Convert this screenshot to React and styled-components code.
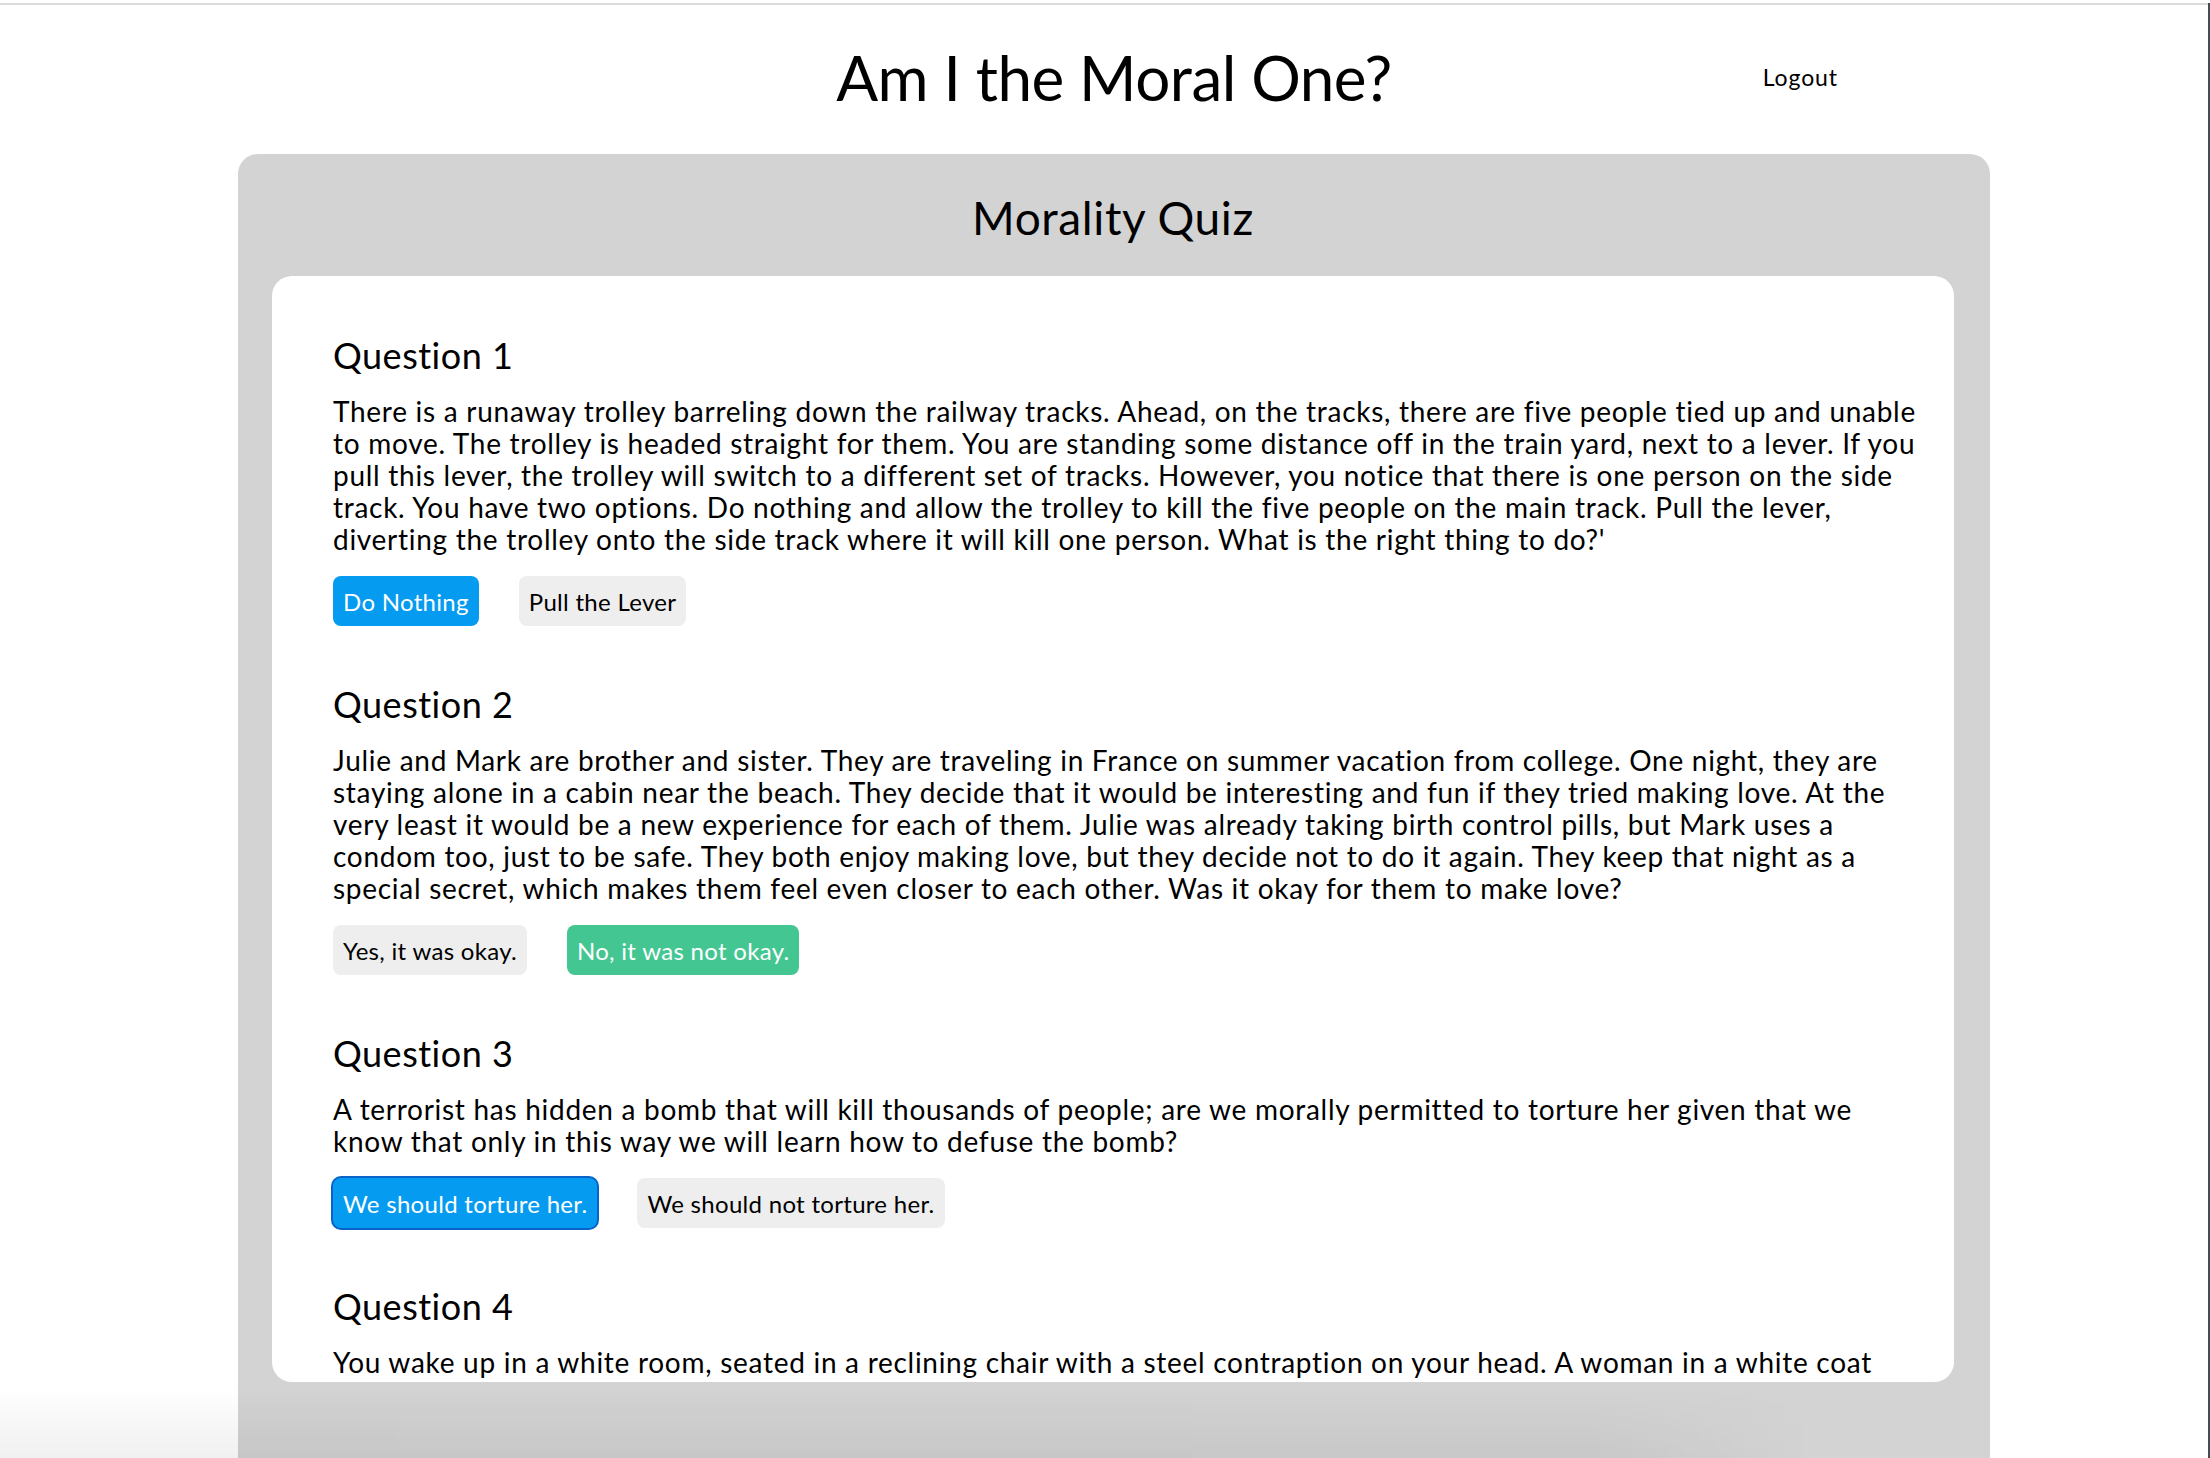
import styled, { createGlobalStyle, css } from "styled-components";

const GlobalStyle = createGlobalStyle`
  html, body {
    margin: 0;
    padding: 0;
    background: #fff;
    overflow: hidden;
  }
  body {
    font-family: Lato, "Open Sans", "Liberation Sans", sans-serif;
    color: #000;
  }
`;

const Page = styled.div`
  min-height: 100vh;
  border-right: 2px solid #474b56;
  box-sizing: border-box;
`;

const TopRule = styled.div`
  height: 2px;
  margin-top: 3px;
  background: #dddddd;
`;

const Header = styled.header`
  display: grid;
  grid-template-columns: 1fr auto 1fr;
  align-items: center;
  width: 1752px;
  height: 149px;
  margin-left: 238px;
  padding-bottom: 5px;
  box-sizing: border-box;
`;

const SiteTitle = styled.h1`
  grid-column: 2;
  margin: 0;
  font-size: 62px;
  font-weight: 400;
  letter-spacing: -0.5px;
`;

const LogoutLink = styled.button`
  justify-self: end;
  margin-right: 152px;
  padding: 0;
  border: none;
  background: none;
  font-family: inherit;
  font-size: 23px;
  letter-spacing: 0.9px;
  color: #000;
  cursor: pointer;
`;

const Panel = styled.main`
  width: 1752px;
  margin-left: 238px;
  padding: 0 36px 120px 34px;
  box-sizing: border-box;
  background: #d3d3d3;
  border-radius: 20px 20px 0 0;
`;

const PanelTitle = styled.h2`
  display: flex;
  align-items: center;
  justify-content: center;
  height: 122px;
  margin: 0;
  padding-top: 4px;
  box-sizing: border-box;
  font-size: 46px;
  font-weight: 400;
  letter-spacing: 0.6px;
`;

const Card = styled.section`
  height: 1106px;
  overflow: hidden;
  padding: 57px 28px 0 61px;
  box-sizing: border-box;
  background: #fff;
  border-radius: 20px;
`;

const Question = styled.div`
  margin-bottom: 56px;
`;

const QuestionTitle = styled.h3`
  margin: 0 0 18px;
  font-size: 36px;
  line-height: 44px;
  font-weight: 400;
  letter-spacing: 0.5px;
`;

const Prompt = styled.p`
  margin: 0 0 21px;
  font-size: 28px;
  line-height: 32px;
  letter-spacing: 0.72px;
`;

const Options = styled.div`
  display: flex;
  gap: 40px;
`;

const variants = {
  blue: css`
    background: #049bf0;
    color: #fff;
  `,
  green: css`
    background: #44c692;
    color: #fff;
  `,
  plain: css`
    background: #eeeeee;
    color: #000;
  `,
};

const OptionButton = styled.button`
  height: 50px;
  padding: 0 10px;
  border: none;
  border-radius: 8px;
  font-family: inherit;
  font-size: 24px;
  letter-spacing: 0.3px;
  cursor: pointer;
  ${({ $variant }) => variants[$variant || "plain"]}
  ${({ $focused }) =>
    $focused &&
    css`
      box-shadow: 0 0 0 2px #0a63c9;
    `}
`;

const BottomShade = styled.div`
  position: fixed;
  left: 0;
  right: 2px;
  bottom: 0;
  height: 70px;
  pointer-events: none;
  background: linear-gradient(to right, rgba(0, 0, 0, 0.06) 0%, rgba(0, 0, 0, 0.05) 72%, rgba(0, 0, 0, 0) 82%);
  -webkit-mask-image: linear-gradient(to bottom, transparent, #000);
  mask-image: linear-gradient(to bottom, transparent, #000);
`;

const questions = [
  {
    title: "Question 1",
    text: "There is a runaway trolley barreling down the railway tracks. Ahead, on the tracks, there are five people tied up and unable to move. The trolley is headed straight for them. You are standing some distance off in the train yard, next to a lever. If you pull this lever, the trolley will switch to a different set of tracks. However, you notice that there is one person on the side track. You have two options. Do nothing and allow the trolley to kill the five people on the main track. Pull the lever, diverting the trolley onto the side track where it will kill one person. What is the right thing to do?'",
    options: [
      { label: "Do Nothing", variant: "blue" },
      { label: "Pull the Lever" },
    ],
  },
  {
    title: "Question 2",
    text: "Julie and Mark are brother and sister. They are traveling in France on summer vacation from college. One night, they are staying alone in a cabin near the beach. They decide that it would be interesting and fun if they tried making love. At the very least it would be a new experience for each of them. Julie was already taking birth control pills, but Mark uses a condom too, just to be safe. They both enjoy making love, but they decide not to do it again. They keep that night as a special secret, which makes them feel even closer to each other. Was it okay for them to make love?",
    options: [
      { label: "Yes, it was okay." },
      { label: "No, it was not okay.", variant: "green" },
    ],
  },
  {
    title: "Question 3",
    text: "A terrorist has hidden a bomb that will kill thousands of people; are we morally permitted to torture her given that we know that only in this way we will learn how to defuse the bomb?",
    options: [
      { label: "We should torture her.", variant: "blue", focused: true },
      { label: "We should not torture her." },
    ],
  },
  {
    title: "Question 4",
    text: "You wake up in a white room, seated in a reclining chair with a steel contraption on your head. A woman in a white coat stands over you. 'The year is 2659,' she explains, 'the life you think you have lived was a simulation.' Would you return to your simulated life?",
    options: [
      { label: "Go back to the simulation." },
      { label: "Stay in the real world." },
    ],
  },
];

export default function App() {
  return (
    <>
      <GlobalStyle />
      <Page>
        <TopRule />
        <Header>
          <SiteTitle>Am I the Moral One?</SiteTitle>
          <LogoutLink>Logout</LogoutLink>
        </Header>
        <Panel>
          <PanelTitle>Morality Quiz</PanelTitle>
          <Card>
            {questions.map((q) => (
              <Question key={q.title}>
                <QuestionTitle>{q.title}</QuestionTitle>
                <Prompt>{q.text}</Prompt>
                <Options>
                  {q.options.map((o) => (
                    <OptionButton key={o.label} $variant={o.variant} $focused={o.focused}>
                      {o.label}
                    </OptionButton>
                  ))}
                </Options>
              </Question>
            ))}
          </Card>
        </Panel>
        <BottomShade />
      </Page>
    </>
  );
}
